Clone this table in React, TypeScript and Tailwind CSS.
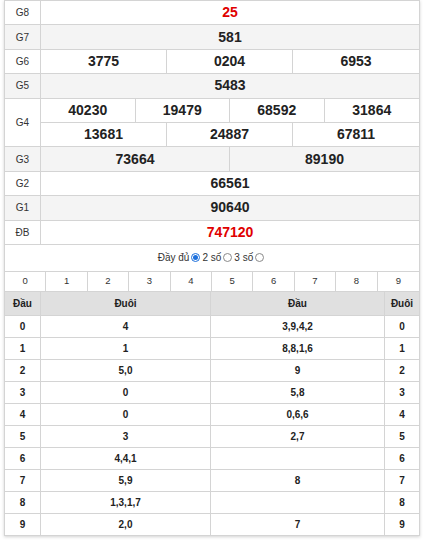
import React from "react";

type Prize = {
  label: string;
  rows: string[][];
  red?: boolean;
  shaded?: boolean;
};

const prizes: Prize[] = [
  { label: "G8", rows: [["25"]], red: true },
  { label: "G7", rows: [["581"]], shaded: true },
  { label: "G6", rows: [["3775", "0204", "6953"]] },
  { label: "G5", rows: [["5483"]], shaded: true },
  {
    label: "G4",
    rows: [
      ["40230", "19479", "68592", "31864"],
      ["13681", "24887", "67811"],
    ],
  },
  { label: "G3", rows: [["73664", "89190"]], shaded: true },
  { label: "G2", rows: [["66561"]] },
  { label: "G1", rows: [["90640"]], shaded: true },
  { label: "ĐB", rows: [["747120"]], red: true },
];

// dau/duoi stats, index = digit
const duoi = ["4", "1", "5,0", "0", "0", "3", "4,4,1", "5,9", "1,3,1,7", "2,0"];
const dau = ["3,9,4,2", "8,8,1,6", "9", "5,8", "0,6,6", "2,7", "", "8", "", "7"];

const gridCols: Record<number, string> = {
  1: "grid-cols-1",
  2: "grid-cols-2",
  3: "grid-cols-3",
  4: "grid-cols-4",
};

const Radio = ({ checked }: { checked?: boolean }) =>
  checked ? (
    <span className="inline-flex items-center justify-center w-[9px] h-[9px] rounded-full border border-[#1b6fdc] mx-[2px]">
      <span className="w-[5px] h-[5px] rounded-full bg-[#1b6fdc]" />
    </span>
  ) : (
    <span className="inline-block w-[9px] h-[9px] rounded-full border border-[#8a8a8a] mx-[2px]" />
  );

export default function App() {
  return (
    <div
      className="w-[425px] h-[543px] bg-white text-[#222]"
      style={{ fontFamily: '"Liberation Sans", Arial, sans-serif' }}
    >
      <div className="ml-[4px] w-[416px] border border-[#d4d4d4] shadow-[0_1px_3px_rgba(0,0,0,0.18)]">
        {/* prize table */}
        <div>
          {prizes.map((p) => (
            <div
              key={p.label}
              className={`flex border-b border-[#d4d4d4] ${p.shaded ? "bg-[#f4f4f4]" : "bg-white"}`}
            >
              <div className="w-[36px] shrink-0 border-r border-[#d4d4d4] flex items-center justify-center text-[10px] text-[#333]">
                {p.label}
              </div>
              <div className="flex-1 flex flex-col">
                {p.rows.map((r, i) => (
                  <div
                    key={i}
                    className={`grid ${gridCols[r.length]} divide-x divide-[#d4d4d4] ${i > 0 ? "h-[24.4px] border-t border-[#d4d4d4]" : "h-[23.4px]"}`}
                  >
                    {r.map((n) => (
                      <div
                        key={n}
                        className={`flex items-center justify-center text-[14px] font-bold ${p.red ? "text-[#e00000]" : ""}`}
                      >
                        {n}
                      </div>
                    ))}
                  </div>
                ))}
              </div>
            </div>
          ))}
        </div>

        {/* mode picker */}
        <div className="h-[26px] flex items-center justify-center text-[10px] text-[#333]">
          <span>Đầy đủ</span>
          <Radio checked />
          <span>2 số</span>
          <Radio />
          <span>3 số</span>
          <Radio />
        </div>

        {/* dau duoi table */}
        <div className="border-t border-[#d4d4d4]">
          <div className="grid grid-cols-10 h-[20px] divide-x divide-[#d4d4d4] border-b border-[#d4d4d4] text-[9.5px] text-[#333]">
            {Array.from({ length: 10 }, (_, i) => (
              <div key={i} className="flex items-center justify-center">
                {i}
              </div>
            ))}
          </div>
          <div className="flex h-[24px] bg-[#e0e0e0] border-b border-[#d4d4d4] text-[10px] font-bold">
            <div className="w-[36px] shrink-0 border-r border-[#d4d4d4] flex items-center justify-center">
              Đầu
            </div>
            <div className="w-[170px] shrink-0 border-r border-[#d4d4d4] flex items-center justify-center">
              Đuôi
            </div>
            <div className="flex-1 border-r border-[#d4d4d4] flex items-center justify-center">
              Đầu
            </div>
            <div className="w-[34px] shrink-0 flex items-center justify-center">
              Đuôi
            </div>
          </div>
          {duoi.map((d, i) => (
            <div
              key={i}
              className={`flex text-[10px] font-bold ${i < 9 ? "h-[22px] border-b border-[#d4d4d4]" : "h-[21px]"}`}
            >
              <div className="w-[36px] shrink-0 border-r border-[#d4d4d4] flex items-center justify-center">
                {i}
              </div>
              <div className="w-[170px] shrink-0 border-r border-[#d4d4d4] flex items-center justify-center">
                {d}
              </div>
              <div className="flex-1 border-r border-[#d4d4d4] flex items-center justify-center">
                {dau[i]}
              </div>
              <div className="w-[34px] shrink-0 flex items-center justify-center">
                {i}
              </div>
            </div>
          ))}
        </div>
      </div>
    </div>
  );
}
